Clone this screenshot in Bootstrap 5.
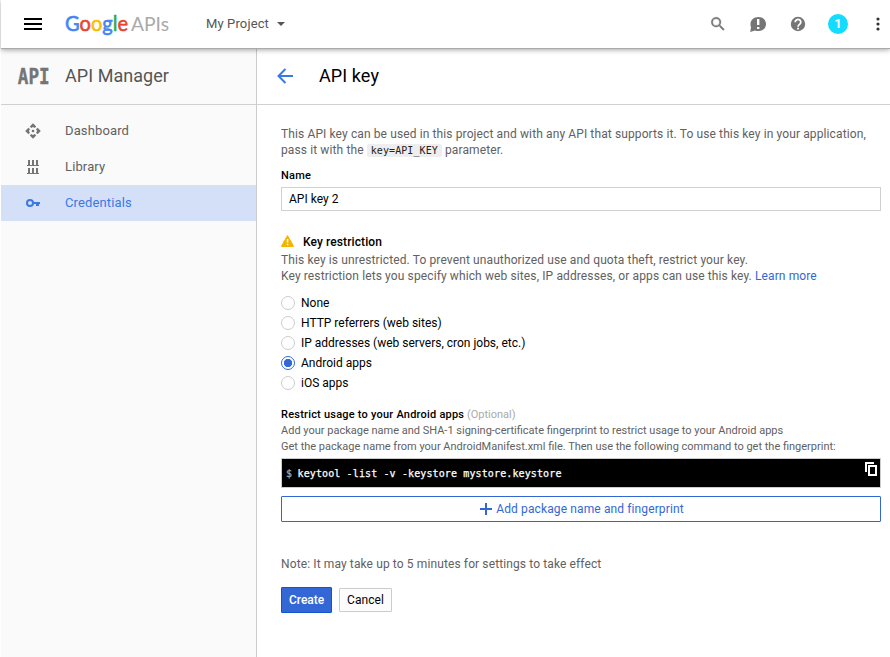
<!DOCTYPE html>
<html lang="en">
<head>
<meta charset="utf-8">
<meta name="viewport" content="width=device-width, initial-scale=1">
<title>API key - API Manager</title>
<link href="https://cdn.jsdelivr.net/npm/bootstrap@5.3.0/dist/css/bootstrap.min.css" rel="stylesheet">
<style>
  body { font: 12px/16px Roboto, "Liberation Sans", sans-serif; color: #000; background: #fff; height: 657px; overflow: hidden; padding-left: 1px; }
  svg { display: block; flex: none; }
  .topbar { height: 49px; padding: 0 2px 1px 23px; border-bottom: 1px solid #aaa; box-shadow: 0 1px 5px rgba(0,0,0,.35); z-index: 2; background: #fff; }
  .logo { margin-left: 23px; }
  .project { margin-left: 35px; font-size: 13px; letter-spacing: .13px; color: #555; }
  .project svg { margin-left: 8px; }
  .tools { color: #757575; }
  .search { margin-right: -1px; }
  .avatar { width: 20px; height: 20px; margin-left: 22px; background: #12dcff; font: 700 13px Roboto, sans-serif; }
  .dots { margin: 0 8px 0 28px; }
  .side { width: 256px; background: #fafafa; border-right: 1px solid #ccc; }
  .bar { height: 56px; padding-bottom: 2px; border-bottom: 1px solid #d0d0d0; font-size: 18px; }
  .side .bar { color: #555; padding-left: 16px; gap: 4px; letter-spacing: .05px; }
  .side .nav { padding-top: 8px; }
  .side .nav-link { height: 36px; padding: 0 0 0 24px; gap: 24px; font-size: 13px; letter-spacing: .135px; color: #616161; }
  .side .nav-link svg { color: #757575; }
  .side .nav-link.active { background: #d4e0f7; color: #3b78e7; }
  .side .nav-link.active svg { color: #3b78e7; }
  .main .bar { padding-left: 20px; letter-spacing: .09px; }
  .title { margin-left: 25px; }
  .content { padding: 21px 9px 0 24px; }
  .soft { color: #616161; letter-spacing: .115px; }
  .soft code { font: 10px/12px "DejaVu Sans Mono", monospace; letter-spacing: .08px; color: #222; background: #eee; padding: 1px 4px; border-radius: 2px; }
  .field-label { font-size: 11px; font-weight: 500; letter-spacing: .22px; line-height: 16px; }
  .content > .field-label { margin-top: 10px; }
  .name-box { height: 24px; min-height: 0; margin-top: 3px; padding: 0 7px; font-size: 12px; line-height: 22px; letter-spacing: .03px; border: 1px solid #d0d0d0; border-radius: 0; color: #000; }
  .key-head { margin-top: 23px; height: 16px; gap: 9px; font-weight: 500; letter-spacing: .1px; margin-bottom: 2px; }
  .key-head svg { margin-bottom: 2px; }
  .blue { color: #3367d6; text-decoration: none; }
  .options { margin-top: 9px; }
  .options .form-check { min-height: 0; height: 20px; padding: 0; margin: 0; gap: 6px; }
  .options .form-check-input { width: 14px; height: 14px; margin: 0; float: none; border: 1px solid #ccc; background: #fff; flex: none; box-shadow: none; }
  .options .form-check-input:checked { border-color: #3367d6; background: radial-gradient(circle, #3367d6 0 3.8px, #fff 4.5px); }
  .hint { font-size: 11px; color: #616161; }
  .restrict { margin-top: 14px; }
  .optional { color: #aaa; }
  .command { height: 30px; border: 1px solid #ccc; background: #000; color: #fff; margin-top: 3px; padding: 0 3px 0 4px; font: 10px "DejaVu Sans Mono", monospace; letter-spacing: .12px; -webkit-text-stroke: .25px; }
  .command .prompt { color: #aaa; width: 11.5px; }
  .command svg { margin-bottom: 9px; }
  .add { height: 26px; margin-top: 8px; padding: 0 0 0 2px; border: 1px solid #3367d6; border-radius: 1px; font-size: 12px; letter-spacing: .12px; line-height: 16px; gap: 4px; }
  .note { margin-top: 34px; }
  .actions { margin-top: 15px; gap: 7px; }
  .act { padding: 0 7px; font-size: 12px; line-height: 22px; border-radius: 1px; }
  .act-create { width: 51px; height: 26px; line-height: 24px; font-weight: 500; color: #fff; background: #3367d6; border: 1px solid #1155cc; letter-spacing: -.03px; }
  .act-cancel { width: 53px; height: 24px; border: 1px solid #ccc; background: #fcfcfc; letter-spacing: .08px; color: #000; }
</style>
<script src="https://cdn.jsdelivr.net/npm/bootstrap@5.3.0/dist/js/bootstrap.bundle.min.js"></script>
</head>
<body class="d-flex flex-column">
<header class="topbar d-flex align-items-center position-relative flex-shrink-0">
  <svg width="18" height="12" fill="#000"><path d="M0 0h18v2H0zM0 5h18v2H0zM0 10h18v2H0z"/></svg>
  <svg class="logo" width="106" height="30" viewBox="0 0 106 30" font-family="Lato, sans-serif">
    <text y="22.200" font-size="22" stroke-width=".6" textLength="63" lengthAdjust="spacingAndGlyphs"><tspan fill="#4285f4" stroke="#4285f4">G</tspan><tspan fill="#ea4335" stroke="#ea4335">o</tspan><tspan fill="#fbbc05" stroke="#fbbc05">o</tspan><tspan fill="#4285f4" stroke="#4285f4">g</tspan><tspan fill="#34a853" stroke="#34a853">l</tspan><tspan fill="#ea4335" stroke="#ea4335">e</tspan></text>
    <text x="66" y="21.800" font-size="20" fill="#aaa" textLength="38" lengthAdjust="spacingAndGlyphs">APIs</text>
  </svg>
  <div class="project d-flex align-items-center">My Project <svg width="8" height="4" fill="#555"><path d="M0 0h8L4 4z"/></svg></div>
  <div class="tools d-flex align-items-center ms-auto">
    <svg class="search" width="18" height="18" viewBox="0 0 24 24" fill="currentColor" stroke="currentColor" stroke-width=".5"><path d="M15.500 14h-.8l-.3-.3A6.500 6.500 0 1 0 13.700 14.400l.3.3v.8l5 5 1.500-1.500zm-6 0a4.500 4.500 0 1 1 0-9 4.500 4.500 0 0 1 0 9z"/></svg>
    <svg width="16" height="16" viewBox="0 0 16 16" class="ms-4"><path fill="currentColor" d="M8.500 1C13 1 16 3.800 16 8s-3 7-7.500 7c-1.500 0-2.500-.2-3.500-.6L.2 16l.8-4.500C.5 10.500.5 9.300.5 8c0-4.200 3.500-7 8-7z"/><path fill="#fff" d="M7 3h2.400v6H7zM7 11h2.400v2H7z"/></svg>
    <svg width="16" height="16" viewBox="2 2 20 20" class="ms-4"><path fill="currentColor" d="M12 3a9 9 0 1 0 0 18 9 9 0 0 0 0-18z"/><path fill="none" stroke="#fff" stroke-width="2.200" d="M8.500 9.800a3.500 3.300 0 1 1 5.800 2.300c-1.200 1-2.200 1.500-2.200 3.200"/><path fill="#fff" d="M10.900 16.600h2.300v2.300h-2.300z"/></svg>
    <div class="avatar rounded-circle text-white d-flex align-items-center justify-content-center">1</div>
    <svg class="dots" width="4" height="14" fill="#333"><circle cx="2" cy="2" r="1.600"/><circle cx="2" cy="7" r="1.600"/><circle cx="2" cy="12" r="1.600"/></svg>
  </div>
</header>
<div class="d-flex flex-grow-1">
  <aside class="side flex-shrink-0">
    <div class="bar d-flex align-items-center">
      <svg width="44" height="36" viewBox="0 0 44 36"><text x=".8" y="25.500" font-family="'DejaVu Sans Mono', monospace" font-weight="700" font-size="21" fill="#757575" stroke="#757575" stroke-width=".4" textLength="32" lengthAdjust="spacingAndGlyphs">API</text></svg><span>API Manager</span>
    </div>
    <nav class="nav flex-column">
      <a class="nav-link d-flex align-items-center" href="#"><svg width="16" height="16" viewBox="0 0 16 16" fill="currentColor"><path d="M8 .2 11.200 3.400 9.800 5 8 3.900 6.200 5 4.800 3.400z"/><path d="M8 15.800 4.800 12.600 6.200 11 8 12.100 9.800 11l1.400 1.600z"/><path d="M.2 8 3.400 4.800 5 6.200 3.900 8 5 9.800l-1.600 1.400z"/><path d="M15.800 8l-3.200 3.200L11 9.800 12.100 8 11 6.200l1.600-1.400z"/><circle cx="8" cy="8" r="1.300"/></svg>Dashboard</a>
      <a class="nav-link d-flex align-items-center" href="#"><svg width="16" height="16" viewBox="0 0 16 16" fill="currentColor"><path d="M3 1h2v5H3zM7 1h2v5H7zM11 1h2v5h-2zM2 6h12v1H2zM3 9h2v5H3zM7 9h2v5H7zM11 9h2v5h-2zM2 14h12v1H2z"/></svg>Library</a>
      <a class="nav-link active d-flex align-items-center" href="#"><svg width="16" height="16" viewBox="0 0 16 16" fill="currentColor"><path fill-rule="evenodd" d="M5 4a4 4 0 1 1 0 8 4 4 0 0 1 0-8zm0 2a2 2 0 1 0 0 4 2 2 0 0 0 0-4z"/><path d="M8.300 7H15v2h-1v2h-3V9H8.300z"/></svg>Credentials</a>
    </nav>
  </aside>
  <main class="main flex-grow-1">
    <div class="bar d-flex align-items-center">
      <svg width="17" height="16" viewBox="0 0 17 16" fill="none" stroke="#3b78e7" stroke-width="2"><path d="M8.500 1 1.500 8l7 7M2 8h14"/></svg>
      <span class="title">API key</span>
    </div>
    <div class="content">
      <div class="soft">This API key can be used in this project and with any API that supports it. To use this key in your application,<br>pass it with the <code>key=API_KEY</code> parameter.</div>
      <label class="field-label d-block" for="keyName">Name</label>
      <input id="keyName" class="name-box form-control" value="API key 2">
      <div class="key-head d-flex align-items-center"><svg width="13" height="12" viewBox="0 0 13 12"><path fill="#f4b400" stroke="#f4b400" stroke-width="1.400" stroke-linejoin="round" d="M6.500 1 12.200 11.200H.8z"/><path fill="#fff" d="M5.800 4h1.500v3.500H5.800zM5.800 8.700h1.500v1.500H5.800z"/></svg>Key restriction</div>
      <div class="soft">This key is unrestricted. To prevent unauthorized use and quota theft, restrict your key.<br>Key restriction lets you specify which web sites, IP addresses, or apps can use this key. <a class="blue" href="#">Learn more</a></div>
      <div class="options">
        <div class="form-check d-flex align-items-center"><input class="form-check-input" type="radio" name="kind" id="k1"><label for="k1">None</label></div>
        <div class="form-check d-flex align-items-center"><input class="form-check-input" type="radio" name="kind" id="k2"><label for="k2">HTTP referrers (web sites)</label></div>
        <div class="form-check d-flex align-items-center"><input class="form-check-input" type="radio" name="kind" id="k3"><label for="k3">IP addresses (web servers, cron jobs, etc.)</label></div>
        <div class="form-check d-flex align-items-center"><input class="form-check-input" type="radio" name="kind" id="k4" checked><label for="k4">Android apps</label></div>
        <div class="form-check d-flex align-items-center"><input class="form-check-input" type="radio" name="kind" id="k5"><label for="k5">iOS apps</label></div>
      </div>
      <div class="hint restrict"><span class="field-label text-black">Restrict usage to your Android apps</span> <span class="optional">(Optional)</span><br>Add your package name and SHA-1 signing-certificate fingerprint to restrict usage to your Android apps<br>Get the package name from your AndroidManifest.xml file. Then use the following command to get the fingerprint:</div>
      <div class="command d-flex align-items-center"><span class="prompt">$</span><span>keytool -list -v -keystore mystore.keystore</span><svg class="ms-auto" width="12" height="14" fill="none" stroke="#fff" stroke-width="2"><path d="M1 10V1h8"/><path d="M4 4h7v9H4z"/></svg></div>
      <button class="add btn blue w-100 d-flex align-items-center justify-content-center"><svg width="12" height="12" fill="#3367d6"><path d="M5 0h2v5h5v2H7v5H5V7H0V5h5z"/></svg>Add package name and fingerprint</button>
      <div class="soft note">Note: It may take up to 5 minutes for settings to take effect</div>
      <div class="actions d-flex align-items-center"><button class="btn act act-create">Create</button><button class="btn act act-cancel">Cancel</button></div>
    </div>
  </main>
</div>
</body>
</html>
